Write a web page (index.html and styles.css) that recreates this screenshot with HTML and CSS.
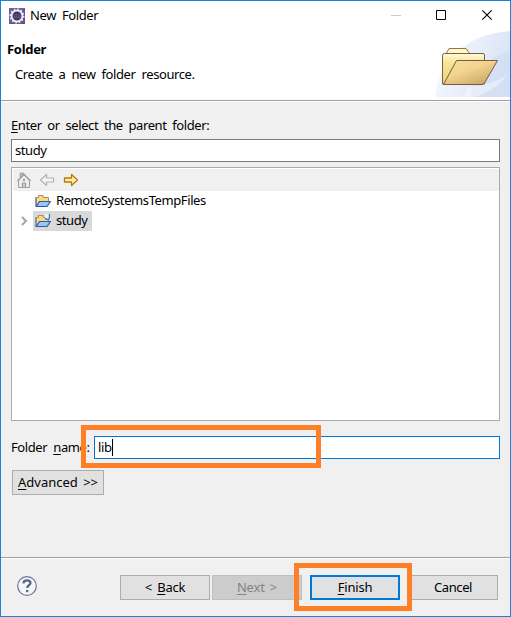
FILE: index.html
```html
<!DOCTYPE html>
<html lang="en">
<head>
<meta charset="utf-8">
<title>New Folder</title>
<link rel="stylesheet" href="styles.css">
</head>
<body>
<div class="window">
  <div class="titlebar">
    <svg class="app-icon" width="16" height="16" viewBox="0 0 16 16"><rect width="16" height="16" fill="#62528c"/><path d="M0 16V0h16z" fill="#7a6aa0" opacity=".6"/><circle cx="8" cy="8" r="6.6" fill="none" stroke="#e4e0ea" stroke-width="1.8" stroke-dasharray="1.8 1.65"/><circle cx="8" cy="8" r="5.400" fill="#3b315f" stroke="#f2eff5" stroke-width="1.8"/><path d="M4.500 6.700h7M4 8.200h8M4.500 9.700h7" stroke="#7e75a0" stroke-width=".6"/></svg>
    <span class="title">New Folder</span>
    <div class="controls">
      <svg width="140" height="29" viewBox="0 0 140 29" fill="none"><path d="M21 14.5h10" stroke="#ccc"/><path d="M66.5 9.5h9v9h-9z" stroke="#000"/><path d="M112.3 9.3l9.4 9.4M121.7 9.3l-9.4 9.4" stroke="#000" stroke-width="1.1"/></svg>
    </div>
  </div>
  <header class="banner">
    <div class="banner-text">
      <h1>Folder</h1>
      <p>Create a new folder resource.</p>
    </div>
    <svg class="banner-art" width="75" height="66" viewBox="0 0 75 66">
      <defs>
        <linearGradient id="sky" x1="0" y1="0" x2="1" y2=".35"><stop offset="0" stop-color="#fbfcff"/><stop offset="1" stop-color="#dae4f7"/></linearGradient>
        <linearGradient id="back" x1="0" y1="0" x2="0" y2="1"><stop offset="0" stop-color="#fffbd8"/><stop offset=".3" stop-color="#f5e596"/><stop offset="1" stop-color="#ecd478"/></linearGradient>
        <linearGradient id="front" x1="0" y1="0" x2=".8" y2="1"><stop offset="0" stop-color="#f8df9c"/><stop offset=".45" stop-color="#f3d491"/><stop offset="1" stop-color="#c9a461"/></linearGradient>
      </defs>
      <path d="M0 66C2 35 27 3 75 0v66z" fill="url(#sky)"/>
      <path d="M35 66C38 42 52 25 75 21v45z" fill="#c9d8f2" opacity=".4"/>
      <path d="M34 56Q56 54 72 44Q62 59 40 66H28z" fill="#fff" opacity=".4"/>
      <path d="M11 23L14 17.500h17l4 5.500z" fill="#fffac8" stroke="#92754d"/>
      <path d="M7.500 53V24.500q0-2 2-2h38.500q1.500 0 1.500 1.500v29z" fill="url(#back)" stroke="#805d49"/>
      <path d="M8.500 53.500L21.500 29.500h41L49.500 52q-1 1.500-2.500 1.500z" fill="url(#front)" stroke="#7c5846" stroke-linejoin="round"/>
    </svg>
  </header>
  <main class="content">
    <label class="parent-label"><u>E</u>nter or select the parent folder:</label>
    <div class="field parent-field"><span>study</span></div>
    <section class="tree">
      <div class="toolbar">
        <svg width="70" height="20" viewBox="0 0 70 20" fill="none">
          <path d="M5.500 10.500v8h11v-8" fill="#ececec" stroke="#a0a0a0"/><path d="M4.500 12L11 5.500l6.500 6.500M7.500 9V4.500h2.500V7" stroke="#a0a0a0" stroke-width="1.600"/><path d="M9.500 18v-4h3v4" fill="#d0d0d0" stroke="#989898"/><path d="M10 10.800h2" stroke="#999" stroke-width="2"/>
          <path d="M27.500 11l6-5.500v3.500h7v4h-7v3.500z" fill="#f5f5f5" stroke="#b0b0b0" stroke-width="1.200" stroke-linejoin="round"/>
          <path d="M64.500 11l-6-5.500v3.500h-7v4h7v3.500z" fill="#fff1a8" stroke="#b87909" stroke-width="1.300" stroke-linejoin="round"/>
        </svg>
      </div>
      <div class="row">
        <span class="twist"></span>
        <div class="item"><svg width="16" height="14" viewBox="0 0 16 14"><path d="M1.500 12V3.500h2v-2h4.500v2h5.500V8" fill="#f8dc84" stroke="#b18a55"/><path d="M1.200 12.500L4.500 7.500h11L12 12.500z" fill="#9cc5f5" stroke="#2c5cad" stroke-width="1.200"/><path d="M.5 3v9" stroke="#7999c9"/></svg><span>RemoteSystemsTempFiles</span></div>
      </div>
      <div class="row">
        <span class="twist"><svg width="7" height="10" viewBox="0 0 7 10"><path d="M1 1L5 5 1 9" fill="none" stroke="#a3a3a3" stroke-width="1.900"/></svg></span>
        <div class="item selected"><svg width="16" height="14" viewBox="0 0 16 14"><path d="M1.500 12V3.500h2v-2h4.500v2h5.500V8" fill="#f8dc84" stroke="#b18a55"/><path d="M1.200 12.500L4.500 7.500h11L12 12.500z" fill="#9cc5f5" stroke="#2c5cad" stroke-width="1.200"/><path d="M.5 3v9" stroke="#7999c9"/><path d="M10 0h6v6h-6z" fill="#e9f0f7"/><path d="M14.500 0v3.500q0 2-2 2t-2-1.500" fill="none" stroke="#4878ab" stroke-width="1.400"/></svg><span>study</span></div>
      </div>
    </section>
    <div class="name-row">
      <label>Folder <u>n</u>ame:</label>
      <div class="field name-field"><span>lib</span><i class="caret"></i></div>
      <div class="mark mark-name"></div>
    </div>
    <div class="button advanced"><span><u>A</u>dvanced &gt;&gt;</span></div>
  </main>
  <footer class="footer">
    <svg class="help" width="20" height="20" viewBox="0 0 20 20" fill="none"><circle cx="10" cy="10" r="9.300" fill="#f6f6f8" stroke="#6b7893" stroke-width="1.200"/><path d="M6.400 7.300Q6.600 4.400 10 4.400t3.500 2.700c0 2.200-3.400 2.200-3.400 5" stroke="#56678c" stroke-width="2.200"/><path d="M9 14h2.300v2.200H9z" fill="#56678c"/></svg>
    <div class="button back"><span>&lt; <u>B</u>ack</span></div>
    <div class="button next"><span><u>N</u>ext &gt;</span></div>
    <div class="button finish"><span><u>F</u>inish</span><div class="mark mark-finish"></div></div>
    <div class="button cancel"><span>Cancel</span></div>
  </footer>
</div>
</body>
</html>
```
FILE: styles.css
```css
* { box-sizing: border-box; }
body {
  margin: 0;
  font: 13px/18px "Noto Sans", "Open Sans", sans-serif;
  letter-spacing: -.4px;
  color: #000;
}
svg { display: block; flex: none; }
span, label, p, h1 { white-space: nowrap; }
.title, .field span, .item span, .button span, .name-row label { padding-bottom: 2px; }
u { text-decoration: underline; text-underline-offset: 2px; text-decoration-thickness: 1px; text-decoration-skip-ink: none; }
.window {
  width: 511px;
  height: 617px;
  border: 1px solid #1883d7;
  background: #f0f0f0;
  display: flex;
  flex-direction: column;
}
.titlebar {
  height: 29px;
  background: #fff;
  display: flex;
  align-items: center;
  padding-left: 8px;
}
.title { margin-left: 5px; word-spacing: 3px; }
.controls { margin-left: auto; }
.banner {
  height: 71px;
  background: #fff;
  border-bottom: 1px solid #a0a0a0;
  box-shadow: 0 1px #fff;
  display: flex;
  justify-content: space-between;
}
.banner-text { padding: 10px 0 0 6px; }
h1 { margin: 0; font-size: 13px; line-height: 18px; font-weight: 700; letter-spacing: -.3px; }
.banner p { margin: 7px 0 0 8px; word-spacing: 3px; }
.banner-art { margin-top: 1px; }
.content { padding: 15px 10px 0; height: 456px; }
.parent-label { display: block; height: 18px; margin-bottom: 5px; word-spacing: 2.7px; }
.field {
  height: 23px;
  background: #fff;
  border: 1px solid #7a7a7a;
  display: flex;
  align-items: center;
  padding-left: 3px;
}
.tree {
  height: 254px;
  margin-top: 5px;
  border: 1px solid #ababab;
  background: #fff;
  padding: 1px;
}
.toolbar { height: 22px; background: #f0f0f0; margin-right: -1px; }
.row { display: flex; height: 20px; }
.twist { width: 20px; display: flex; align-items: center; padding-left: 8px; }
.item { display: flex; align-items: center; padding: 0 4px 0 2px; gap: 5px; }
.selected { background: #d9d9d9; }
.name-row {
  position: relative;
  margin-top: 15px;
  height: 23px;
  display: flex;
  align-items: center;
}
.name-row label { width: 83px; word-spacing: 3px; }
.name-field { flex: 1; border-color: #0078d7; }
.caret { width: 1px; height: 17px; background: #000; }
.mark { position: absolute; border: 5px solid #ff7f27; }
.mark-name { left: 70px; top: -11px; width: 240px; height: 43px; }
.button {
  width: 90px;
  height: 25px;
  background: #e1e1e1;
  border: 1px solid #adadad;
  display: flex;
  align-items: center;
  justify-content: center;
  letter-spacing: -.2px;
  word-spacing: 2px;
}
.advanced { width: 92px; margin: 11px 0 0 1px; letter-spacing: 0; }
.footer {
  flex: 1;
  border-top: 1px solid #a0a0a0;
  box-shadow: inset 0 1px #fff;
  display: flex;
  align-items: flex-start;
  padding: 17px 12px 0 16px;
}
.help { margin: 1px auto 0 0; }
.next { margin-left: 2px; background: #ccc; border-color: #bfbfbf; color: #838383; }
.finish { position: relative; margin-left: 8px; border: 2px solid #0078d7; z-index: 1; }
.cancel { margin-left: 8px; letter-spacing: -.4px; }
.mark-finish { left: -18px; top: -14px; width: 118px; height: 48px; }
```
